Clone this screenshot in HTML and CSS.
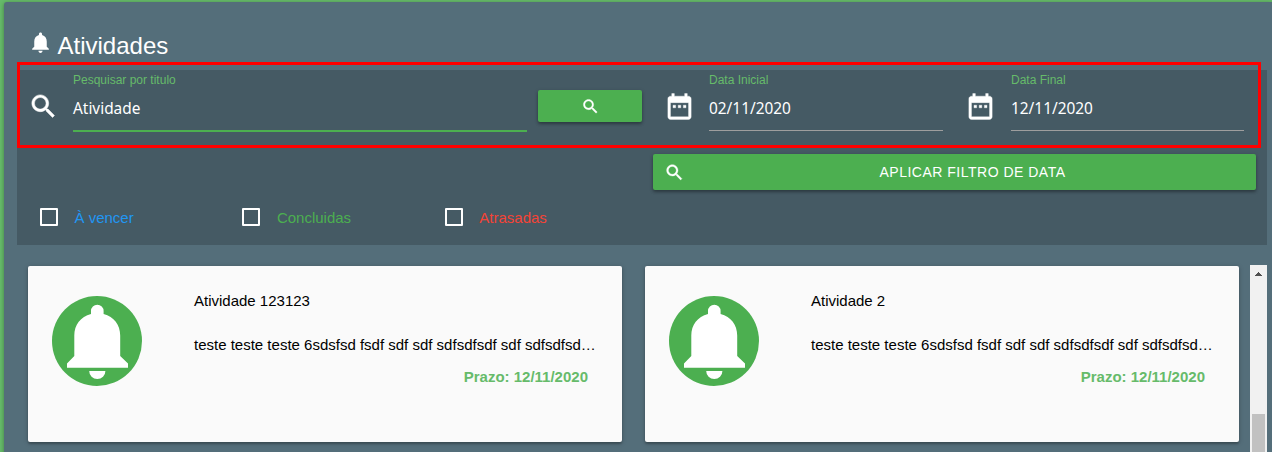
FILE: index.html
```html
<!DOCTYPE html>
<html lang="pt-BR">
<head>
<meta charset="utf-8">
<title>Atividades</title>
<link rel="stylesheet" href="styles.css">
</head>
<body>
<svg class="defs" width="0" height="0">
  <symbol id="search" viewBox="0 0 24 24"><path d="M15.5 14h-.79l-.28-.27C15.41 12.59 16 11.11 16 9.5 16 5.91 13.09 3 9.5 3S3 5.91 3 9.5 5.91 16 9.5 16c1.61 0 3.09-.59 4.23-1.57l.27.28v.79l5 4.99L20.49 19l-4.99-5zm-6 0C7.01 14 5 11.99 5 9.5S7.01 5 9.5 5 14 7.01 14 9.5 11.99 14 9.5 14z"/></symbol>
  <symbol id="date" viewBox="0 0 24 24"><path d="M9 11H7v2h2v-2zm4 0h-2v2h2v-2zm4 0h-2v2h2v-2zm2-7h-1V2h-2v2H8V2H6v2H5c-1.11 0-1.99.9-1.99 2L3 20c0 1.1.89 2 2 2h14c1.1 0 2-.9 2-2V6c0-1.1-.9-2-2-2zm0 16H5V9h14v11z"/></symbol>
  <symbol id="bell" viewBox="0 0 24 24"><path d="M12 22c1.1 0 2-.9 2-2h-4c0 1.1.89 2 2 2zm6-6v-5c0-3.07-1.64-5.64-4.5-6.32V4c0-.83-.67-1.500-1.5-1.500s-1.500.67-1.500 1.500v.68C7.630 5.360 6 7.920 6 11v5l-2 2v1h16v-1l-2-2z"/></symbol>
  <symbol id="badge" viewBox="0 0 90 90"><circle class="disc" cx="45" cy="45" r="45"/><path d="M39 18v-3a6.300 6.300 0 0 1 12.600 0v3C62 20.500 68.200 29 68.200 39.500V60l7.800 7.500v4.200H15v-4.200L22.300 60V39.500C22.300 29 28.600 20.500 39 18zM37.200 75h16.200a8.100 8 0 0 1-16.200 0z"/></symbol>
</svg>
<main class="panel">
  <h1 class="title"><svg class="title-icon"><use href="#bell"/></svg>Atividades</h1>
  <section class="filters">
    <div class="row">
      <div class="search">
        <svg class="search-icon"><use href="#search"/></svg>
        <label class="field active"><span class="label">Pesquisar por titulo</span><span class="value">Atividade</span></label>
        <button class="btn small"><svg><use href="#search"/></svg></button>
      </div>
      <div class="date start">
        <svg class="date-icon"><use href="#date"/></svg>
        <label class="field"><span class="label">Data Inicial</span><span class="value">02/11/2020</span></label>
      </div>
      <div class="date end">
        <svg class="date-icon"><use href="#date"/></svg>
        <label class="field"><span class="label">Data Final</span><span class="value">12/11/2020</span></label>
      </div>
    </div>
    <button class="btn apply"><svg><use href="#search"/></svg><span>APLICAR FILTRO DE DATA</span></button>
    <div class="checks">
      <label class="check upcoming"><i></i><span>À vencer</span></label>
      <label class="check done"><i></i><span>Concluidas</span></label>
      <label class="check late"><i></i><span>Atrasadas</span></label>
    </div>
    <div class="highlight"></div>
  </section>
  <section class="list">
    <div class="cards">
      <article class="card">
        <svg class="badge"><use href="#badge"/></svg>
        <div class="info"><h2>Atividade 123123</h2><p>teste teste teste 6sdsfsd fsdf sdf sdf sdfsdfsdf sdf sdfsdfsd…</p><strong>Prazo: 12/11/2020</strong></div>
      </article>
      <article class="card">
        <svg class="badge"><use href="#badge"/></svg>
        <div class="info"><h2>Atividade 2</h2><p>teste teste teste 6sdsfsd fsdf sdf sdf sdfsdfsdf sdf sdfsdfsd…</p><strong>Prazo: 12/11/2020</strong></div>
      </article>
    </div>
    <div class="scrollbar"><svg class="arrow" viewBox="0 0 7 4" shape-rendering="crispEdges"><path d="M3 0h1v1h1v1h1v1h1v1H0V3h1V2h1V1h1z"/></svg><div class="thumb"></div></div>
  </section>
</main>
</body>
</html>
```
FILE: styles.css
```css
* { box-sizing: border-box; }
body {
  margin: 0;
  height: 452px;
  padding: 2px 0 0 4px;
  overflow: hidden;
  background: #66bb6a;
  font-family: "Liberation Sans", Arial, sans-serif;
  font-size: 15px;
}
svg { display: block; flex: none; fill: #fff; }
.defs { position: absolute; }
.panel {
  height: 460px;
  padding: 0 5px 0 13px;
  background: #546e7a;
  border-radius: 3px 0 0 0;
  box-shadow: 0 1px 4px rgba(0, 0, 0, .35);
}
.title {
  display: flex;
  height: 68px;
  margin: 0;
  padding: 30px 0 0 11px;
  color: #fff;
  font-size: 24px;
  font-weight: 400;
  line-height: 28px;
}
.title-icon { width: 25px; height: 25px; margin: -2px 4.500px 0 0; }
.filters {
  position: relative;
  height: 175px;
  background: #455a64;
}
.row { display: flex; height: 84px; }
.search { display: flex; width: 647px; padding-left: 11px; }
.search-icon { width: 31px; height: 31px; margin-top: 21px; }
.search svg, .apply svg { stroke: #fff; stroke-width: .4px; }
.field {
  display: flex;
  flex-direction: column;
  width: 234px;
  height: 61px;
  padding-top: 3px;
  border-bottom: 1px solid #9e9e9e;
}
.search .field {
  width: 454px;
  height: 62px;
  margin: 0 11px 0 14px;
  border-bottom: 2px solid #4caf50;
}
.label { color: #66bb6a; font-size: 12px; line-height: 14px; }
.value {
  margin-top: 11px;
  color: #fff;
  font-family: "Noto Sans", "Open Sans", sans-serif;
  font-size: 15.4px;
  line-height: 21px;
}
.btn {
  display: flex;
  align-items: center;
  padding: 0;
  border: 0;
  border-radius: 2px;
  background: #4caf50;
  color: #fff;
  font: 14px "Liberation Sans", Arial, sans-serif;
  letter-spacing: .5px;
  box-shadow: 0 2px 3px rgba(0, 0, 0, .28), 0 1px 4px rgba(0, 0, 0, .15);
}
.small { justify-content: center; width: 104px; height: 32px; margin-top: 20px; }
.small svg { width: 19px; height: 19px; }
.date { display: flex; flex: none; }
.start { width: 301px; }
.date-icon { width: 31px; height: 31px; margin: 21px 14px 0 0; stroke: #fff; stroke-width: .3px; }
.end .date-icon { margin-right: 15px; }
.end .field { width: 233px; }
.apply { width: 603px; height: 36px; margin-left: 636px; padding-left: 11px; }
.apply svg { width: 21px; height: 21px; }
.apply span { flex: 1; padding-left: 4px; text-align: center; }
.checks { display: flex; padding: 18px 0 0 23px; }
.check {
  display: flex;
  align-items: center;
  gap: 16.500px;
  width: 202.400px;
  height: 18px;
}
.check i { width: 18px; height: 18px; border: 2px solid #fff; border-radius: 1px; }
.check span { padding-top: 2px; line-height: 18px; }
.upcoming { color: #2196f3; }
.done { color: #4caf50; }
.late { color: #f44336; }
.highlight {
  position: absolute;
  top: -8px;
  left: 0;
  width: 1244px;
  height: 86px;
  border: 3px solid #f00;
}
.list { display: flex; justify-content: space-between; height: 215px; padding: 20px 0 0 11px; }
.cards { display: flex; gap: 23px; padding-top: 1px; }
.card {
  display: flex;
  width: 594px;
  height: 176px;
  padding: 24px 26px 0 24px;
  border-radius: 2px;
  background: #fafafa;
  box-shadow: 0 2px 2px rgba(0, 0, 0, .2), 0 1px 5px rgba(0, 0, 0, .22);
}
.badge { width: 90px; height: 90px; margin: 6px 52px 0 0; }
.disc { fill: #4caf50; }
.info { flex: 1; min-width: 0; }
.info h2 { margin: 0; font-size: 15px; font-weight: 400; line-height: 22px; }
.info p { margin: 22px 0 0; white-space: nowrap; line-height: 22px; }
.info strong { display: block; padding: 10px 8px 0 0; color: #66bb6a; text-align: right; line-height: 22px; }
.scrollbar { display: flex; flex-direction: column; align-items: center; width: 17px; background: #f1f1f1; }
.arrow { width: 7px; height: 4px; margin-top: 7px; fill: #505050; }
.thumb { width: 13px; flex: 1; margin-top: 138px; background: #c1c1c1; }
```
